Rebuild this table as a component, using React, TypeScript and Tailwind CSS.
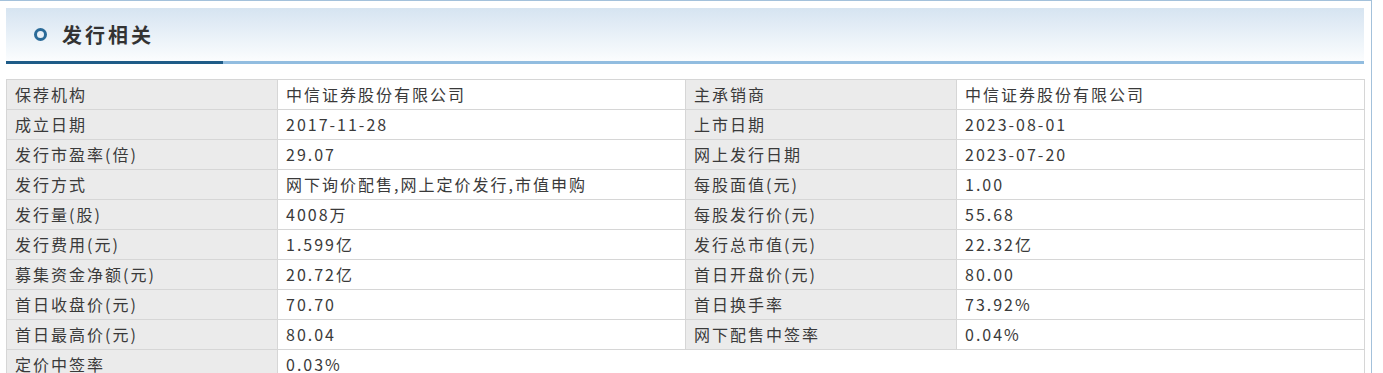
const rows: [string, string, string, string][] = [
  ["保荐机构", "中信证券股份有限公司", "主承销商", "中信证券股份有限公司"],
  ["成立日期", "2017-11-28", "上市日期", "2023-08-01"],
  ["发行市盈率(倍)", "29.07", "网上发行日期", "2023-07-20"],
  ["发行方式", "网下询价配售,网上定价发行,市值申购", "每股面值(元)", "1.00"],
  ["发行量(股)", "4008万", "每股发行价(元)", "55.68"],
  ["发行费用(元)", "1.599亿", "发行总市值(元)", "22.32亿"],
  ["募集资金净额(元)", "20.72亿", "首日开盘价(元)", "80.00"],
  ["首日收盘价(元)", "70.70", "首日换手率", "73.92%"],
  ["首日最高价(元)", "80.04", "网下配售中签率", "0.04%"],
];

const label = "bg-[#ebebeb] border border-[#d6d6d6] pl-[8px] pb-[2px]";
const value = "bg-white border border-[#d6d6d6] pl-[8px] pb-[2px]";

export default function App() {
  return (
    <div
      className="w-[1372px] h-[373px] overflow-hidden bg-white border-t border-r border-[#a3c1db] text-[#3a3a3a]"
      style={{ fontFamily: '"Noto Sans CJK SC", "Noto Sans", sans-serif' }}
    >
      <div className="pl-[6px] pr-[7px] pt-[7px]">
        {/* Section header */}
        <div className="h-[53px] bg-linear-to-b from-[#d6e4f1] to-[#fbfdfe] flex items-center pl-[28px] gap-[15px]">
          <span className="w-[13px] h-[13px] rounded-full border-[3px] border-[#2a6a98]"></span>
          <h2 className="text-[20px] font-bold tracking-[3px] text-[#333] leading-none">发行相关</h2>
        </div>
        <div className="flex h-[3px]">
          <div className="w-[217px] bg-[#1f5c88]"></div>
          <div className="flex-1 bg-[#92bde0]"></div>
        </div>

        {/* Data table */}
        <table className="mt-[15px] w-[1358px] table-fixed border-collapse text-[16px] tracking-[2px]">
          <colgroup>
            <col className="w-[271px]" />
            <col className="w-[408px]" />
            <col className="w-[271px]" />
            <col className="w-[408px]" />
          </colgroup>
          <tbody>
            {rows.map((r) => (
              <tr key={r[0]} className="h-[30px]">
                <td className={label}>{r[0]}</td>
                <td className={value}>{r[1]}</td>
                <td className={label}>{r[2]}</td>
                <td className={value}>{r[3]}</td>
              </tr>
            ))}
            <tr className="h-[30px]">
              <td className={label}>定价中签率</td>
              <td className={value} colSpan={3}>0.03%</td>
            </tr>
          </tbody>
        </table>
      </div>
    </div>
  );
}
